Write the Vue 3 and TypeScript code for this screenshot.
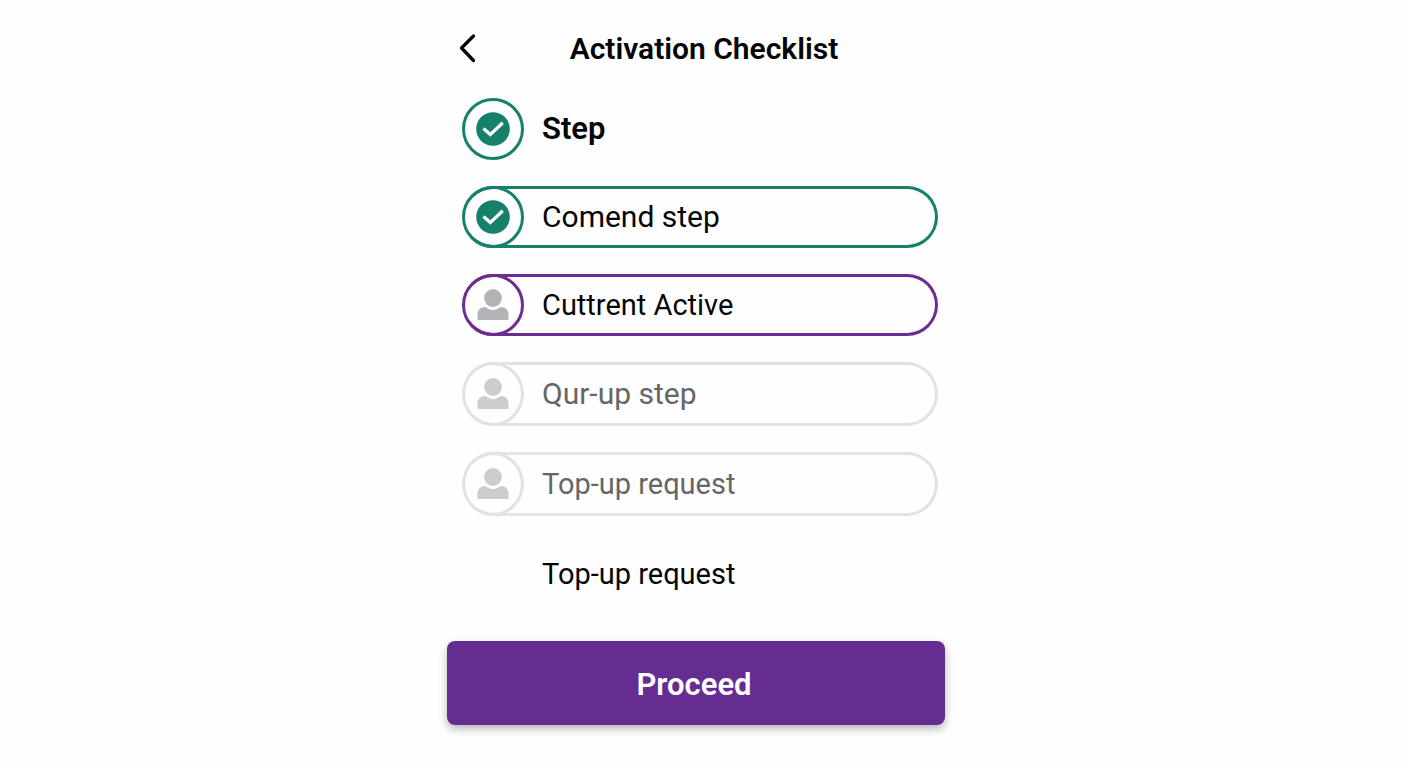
<script setup lang="ts">
type Status = 'done' | 'active' | 'pending' | 'plain'

interface Step {
  id: number
  label: string
  status: Status
  heading?: boolean
  compact?: boolean
}

const steps: Step[] = [
  { id: 1, label: 'Step', status: 'done', heading: true },
  { id: 2, label: 'Comend step', status: 'done' },
  { id: 3, label: 'Cuttrent Active', status: 'active', compact: true },
  { id: 4, label: 'Qur-up step', status: 'pending' },
  { id: 5, label: 'Top-up request', status: 'pending', compact: true },
  { id: 6, label: 'Top-up request', status: 'plain', compact: true },
]
</script>

<template>
  <main class="screen">
    <header class="header">
      <button class="back" type="button" aria-label="Back">
        <svg width="20" height="32" viewBox="0 0 20 32" aria-hidden="true">
          <path d="M16.500 4 4.500 16l12 12.500" fill="none" stroke="currentColor" stroke-width="3.3" stroke-linecap="round" stroke-linejoin="round" />
        </svg>
      </button>
      <h1 class="title">Activation Checklist</h1>
    </header>

    <ol class="steps">
      <li v-for="step in steps" :key="step.id" class="step" :class="[step.status, { heading: step.heading, compact: step.compact }]">
        <span class="marker">
          <svg v-if="step.status === 'done'" width="34" height="34" viewBox="0 0 34 34" aria-hidden="true">
            <circle cx="17" cy="17" r="16.8" fill="currentColor" />
            <path d="M7.500 16.500 14.300 22.600 26.700 10.800" fill="none" stroke="#fff" stroke-width="3.3" />
          </svg>
          <svg v-else-if="step.status !== 'plain'" class="person" width="34" height="34" viewBox="0 0 34 34" aria-hidden="true">
            <circle cx="17" cy="10" r="8.9" fill="currentColor" />
            <path d="M1.500 31V26.500C1.500 22 4.500 19 9 19C11 19.500 13 22 17 22S23 19.500 25 19C29.500 19 32.500 22 32.500 26.500V31Q32.500 32 31.500 32H2.500Q1.500 32 1.500 31Z" fill="currentColor" />
          </svg>
        </span>
        <span class="label">{{ step.label }}</span>
      </li>
    </ol>

    <button class="proceed" type="button">Proceed</button>
  </main>
</template>

<style>
body {
  margin: 0;
  background: #fefefe;
}
</style>

<style scoped>
.screen {
  box-sizing: border-box;
  max-width: 514px;
  margin: 0 auto;
  padding-top: 24px;
  padding-bottom: 40px;
  font-family: Roboto, "Liberation Sans", sans-serif;
  font-size: 30px;
  line-height: 36px;
  color: #050505;
}

.header {
  display: grid;
  grid-template-columns: 48px 1fr 48px;
  align-items: center;
  height: 48px;
}

.back {
  display: flex;
  align-items: center;
  height: 48px;
  padding: 0 10px;
  border: 0;
  background: none;
  color: inherit;
  cursor: pointer;
}

.title {
  margin: 0;
  padding-top: 2px;
  font-size: 30px;
  font-weight: 600;
  text-align: center;
}

.steps {
  display: flex;
  flex-direction: column;
  gap: 26px;
  margin: 26px 23px 0 15px;
  padding: 0;
  list-style: none;
}

.step {
  display: flex;
  align-items: center;
  gap: 18px;
  box-sizing: border-box;
  height: 62px;
  border: 3px solid currentColor;
  border-left-color: transparent;
  border-radius: 31px / 50%;
}

.marker {
  display: flex;
  align-items: center;
  justify-content: center;
  box-sizing: border-box;
  flex: none;
  width: 62px;
  height: 62px;
  margin-left: -3px;
  border: 3px solid currentColor;
  border-radius: 50%;
}

.label {
  color: #050505;
}

.done {
  color: #17806a;
}

.active {
  color: #6c2c91;
}

.pending,
.plain {
  height: 64px;
}

.pending {
  color: #e2e2e2;
}

.pending .marker {
  height: 64px;
}

.pending .label {
  color: #666;
}

.person {
  color: #b4b4b8;
}

.pending .person {
  color: #cbcccd;
}

.heading,
.plain {
  border-color: transparent;
}

.compact .label {
  font-size: 29px;
}

.heading .label {
  font-size: 31px;
  font-weight: 600;
}

.plain .marker {
  border-color: transparent;
}

.proceed {
  display: block;
  width: calc(100% - 16px);
  height: 84px;
  margin-top: 35px;
  padding: 3px 4px 0 0;
  border: 0;
  border-radius: 8px;
  background: #652d92;
  box-shadow: 0 4px 8px rgba(0, 0, 0, 0.28);
  color: #fff;
  font: inherit;
  font-size: 31px;
  font-weight: 600;
  cursor: pointer;
}
</style>
